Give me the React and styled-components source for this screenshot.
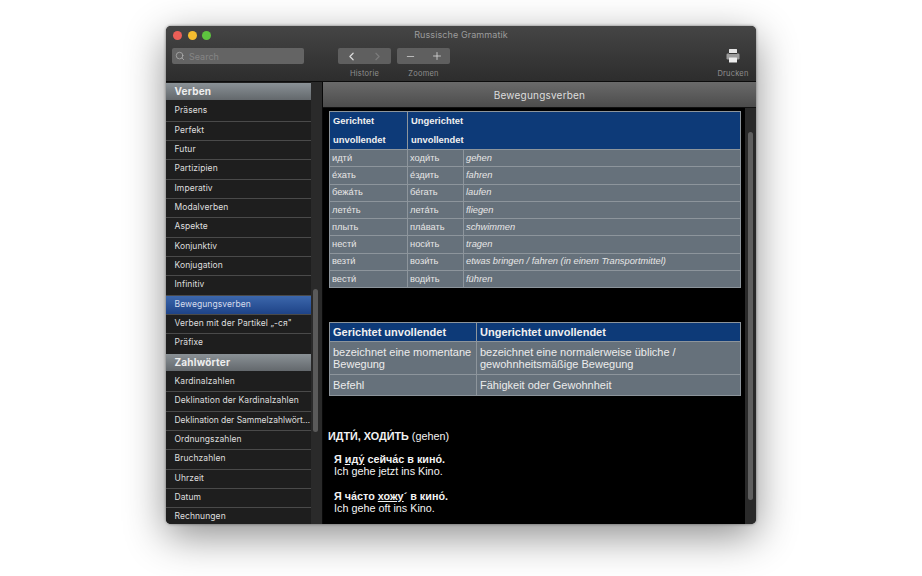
import React from 'react';
import styled, { createGlobalStyle } from 'styled-components';
import { ChevronLeft, ChevronRight, Minus, Plus, Search } from 'lucide-react';

const Global = createGlobalStyle`
  html, body { margin: 0; background: #fff; height: 100%; overflow: hidden; }
`;

const Window = styled.div`
  width: 590px;
  height: 498px;
  margin: 26px 0 0 166px;
  border-radius: 5px;
  overflow: hidden;
  display: flex;
  flex-direction: column;
  font-family: Inter, "Noto Sans", sans-serif;
  box-shadow: 0 12px 40px rgba(0, 0, 0, 0.45), 0 0 3px rgba(0, 0, 0, 0.5);
  background: #1e1e1e;
`;

const Header = styled.header`
  height: 55px;
  flex: none;
  background: linear-gradient(#454545, #2d2d2d);
  border-bottom: 1px solid #0c0c0c;
  display: flex;
  flex-direction: column;
`;

const TitleBar = styled.div`
  height: 17px;
  flex: none;
  display: grid;
  grid-template-columns: 1fr auto 1fr;
  align-items: center;
  padding: 0 7px 0 7px;
`;

const Lights = styled.div`
  display: flex;
  gap: 5.5px;
  margin-top: 1px;
`;

const Light = styled.span`
  width: 9px;
  height: 9px;
  border-radius: 50%;
  background: ${p => p.$color};
`;

const Title = styled.div`
  font-size: 9px;
  letter-spacing: 0.1px;
  color: #9c9c9c;
`;

const Toolbar = styled.div`
  flex: 1;
  display: flex;
  padding: 5px 6px 0;
  align-items: flex-start;
`;

const SearchBox = styled.div`
  width: 132px;
  height: 16px;
  border-radius: 2px;
  background: #646464;
  display: flex;
  align-items: center;
  gap: 4px;
  padding-left: 3px;
  box-sizing: border-box;
  font-size: 9px;
  color: #858585;
  margin-right: 34px;
  svg { color: #bdbdbd; }
`;

const ToolGroup = styled.div`
  width: 53px;
  margin-right: 6px;
  display: flex;
  flex-direction: column;
  align-items: center;
`;

const Segmented = styled.div`
  width: 53px;
  height: 16px;
  border-radius: 2px;
  background: #5f5f5f;
  display: flex;
`;

const Segment = styled.span`
  flex: 1;
  display: flex;
  align-items: center;
  justify-content: center;
  color: ${p => p.$off ? '#7c7c7c' : '#dcdcdc'};
`;

const ToolLabel = styled.div`
  font-size: 7.5px;
  letter-spacing: 0.2px;
  color: #8f8f8f;
  margin-top: 5px;
  line-height: 10px;
  white-space: nowrap;
`;

const PrintGroup = styled.div`
  margin-left: auto;
  width: 34px;
  display: flex;
  flex-direction: column;
  align-items: center;
`;

const PrintIcon = styled.svg`
  width: 16px;
  height: 16px;
  display: block;
`;

const Body = styled.div`
  flex: 1;
  min-height: 0;
  display: flex;
`;

const Side = styled.aside`
  width: 156px;
  flex: none;
  display: flex;
  border-right: 1px solid #080808;
  background: #2a2a2a;
`;

const List = styled.div`
  width: 145px;
  flex: none;
  overflow: hidden;
  padding-top: 1px;
  background: #1e1e1e;
`;

const Section = styled.div`
  height: 17.33px;
  margin-bottom: 2px;
  padding-left: 8.5px;
  background: linear-gradient(#8a9196, #63686c);
  font-weight: 700;
  font-size: 10px;
  line-height: 17.33px;
  letter-spacing: 0.2px;
  color: #eeeeee;
`;

const Item = styled.div`
  height: 18.33px;
  line-height: 17px;
  border-bottom: 1px solid #4a4a4a;
  padding-left: 8.5px;
  font-size: 8.5px;
  letter-spacing: ${p => p.$tight ? '-0.04px' : '0.08px'};
  color: ${p => p.$active ? '#d5dcec' : '#dedede'};
  white-space: nowrap;
  background: ${p => p.$active ? 'linear-gradient(#3c67ac, #1e4387)' : 'transparent'};
  ${p => p.$noRule && 'border-bottom-color: transparent;'}
`;

const SideTrack = styled.div`
  flex: 1;
  position: relative;
`;

const SideThumb = styled.div`
  position: absolute;
  left: 2px;
  top: 207px;
  width: 5px;
  height: 143px;
  border-radius: 3px;
  background: #5a5a5a;
`;

const Main = styled.main`
  flex: 1;
  min-width: 0;
  display: flex;
  flex-direction: column;
`;

const MainTitle = styled.div`
  height: 26px;
  flex: none;
  background: linear-gradient(#6a6a6a, #4c4c4c);
  border-bottom: 1px solid #111;
  box-sizing: border-box;
  text-align: center;
  line-height: 26px;
  font-size: 10px;
  letter-spacing: 0.2px;
  color: #dddddd;
`;

const MainBody = styled.div`
  flex: 1;
  min-height: 0;
  display: flex;
`;

const Content = styled.div`
  flex: 1;
  min-width: 0;
  overflow: hidden;
  background: #000;
  padding: 3px 4px 0 5px;
  font-family: "Liberation Sans", Arial, sans-serif;
`;

const MainTrack = styled.div`
  width: 11px;
  flex: none;
  background: #2a2a2a;
  position: relative;
`;

const MainThumb = styled.div`
  position: absolute;
  left: 3px;
  top: 24px;
  width: 5px;
  height: 368px;
  border-radius: 3px;
  background: #5f5f5f;
`;

const Table = styled.table`
  width: 412px;
  margin: 0 0 ${p => p.$after}px 1px;
  border-collapse: collapse;
  table-layout: fixed;
  border: 1px solid #8d959c;
  color: #e6e6e6;
`;

const Head = styled.th`
  background: #0d3a78;
  border: 1px solid #8d959c;
  color: #f0f0f0;
  font-weight: 700;
  text-align: left;
  vertical-align: top;
  font-size: ${p => p.$large ? '11px' : '9.4px'};
  line-height: ${p => p.$large ? '18px' : '18.5px'};
  padding: 0 3px;
`;

const Cell = styled.td`
  background: #66717b;
  border: 1px solid #8d959c;
  font-size: 9.3px;
  height: 16.3px;
  line-height: 11px;
  padding: 0 2px;
  font-style: ${p => p.$it ? 'italic' : 'normal'};
  white-space: nowrap;
`;

const TextCell = styled.td`
  background: #66717b;
  border: 1px solid #8d959c;
  font-size: 11px;
  line-height: 12.5px;
  padding: 3.5px 3px;
  color: #ececec;
`;

const Article = styled.div`
  color: #f2f2f2;
  font-size: 10.8px;
  line-height: 12px;
`;

const Lead = styled.p`
  margin: 0 0 11px;
`;

const Example = styled.p`
  margin: 0 0 13px 6px;
`;

const U = styled.u`
  text-underline-offset: 1px;
`;

const verbs = [
  ['идти́', 'ходи́ть', 'gehen'],
  ['е́хать', 'е́здить', 'fahren'],
  ['бежа́ть', 'бе́гать', 'laufen'],
  ['лете́ть', 'лета́ть', 'fliegen'],
  ['плыть', 'пла́вать', 'schwimmen'],
  ['нести́', 'носи́ть', 'tragen'],
  ['везти́', 'вози́ть', 'etwas bringen / fahren (in einem Transportmittel)'],
  ['вести́', 'води́ть', 'führen'],
];

const longEntry = 'Deklination der Sammelzahlwört…';

const menu = [
  { head: 'Verben' },
  'Präsens', 'Perfekt', 'Futur', 'Partizipien', 'Imperativ', 'Modalverben', 'Aspekte',
  'Konjunktiv', 'Konjugation', 'Infinitiv', 'Bewegungsverben',
  'Verben mit der Partikel „-ся"', 'Präfixe',
  { head: 'Zahlwörter' },
  'Kardinalzahlen', 'Deklination der Kardinalzahlen', longEntry,
  'Ordnungszahlen', 'Bruchzahlen', 'Uhrzeit', 'Datum', 'Rechnungen',
];

export default function App() {
  return (
    <>
      <Global />
      <Window>
        <Header>
          <TitleBar>
            <Lights>
              <Light $color="#ec5f57" />
              <Light $color="#f5bd2f" />
              <Light $color="#5ec43f" />
            </Lights>
            <Title>Russische Grammatik</Title>
          </TitleBar>
          <Toolbar>
            <SearchBox>
              <Search size={10} strokeWidth={1.6} />
              Search
            </SearchBox>
            <ToolGroup>
              <Segmented>
                <Segment><ChevronLeft size={13} strokeWidth={2.2} /></Segment>
                <Segment $off><ChevronRight size={13} strokeWidth={2} /></Segment>
              </Segmented>
              <ToolLabel>Historie</ToolLabel>
            </ToolGroup>
            <ToolGroup>
              <Segmented>
                <Segment><Minus size={11} strokeWidth={1.6} /></Segment>
                <Segment><Plus size={12} strokeWidth={1.6} /></Segment>
              </Segmented>
              <ToolLabel>Zoomen</ToolLabel>
            </ToolGroup>
            <PrintGroup>
              <PrintIcon viewBox="0 0 16 16">
                <rect x="4" y="1" width="8" height="4" rx="0.5" fill="#e4e4e4" />
                <rect x="1.5" y="5.5" width="13" height="6" rx="1.2" fill="#9a9a9a" />
                <rect x="4" y="9.5" width="8" height="5" rx="0.5" fill="#ececec" />
                <rect x="4" y="5" width="8" height="1" fill="#333" />
              </PrintIcon>
              <ToolLabel>Drucken</ToolLabel>
            </PrintGroup>
          </Toolbar>
        </Header>
        <Body>
          <Side>
            <List>
              {menu.map((entry, i) =>
                entry.head
                  ? <Section key={i}>{entry.head}</Section>
                  : <Item key={i} $active={entry === 'Bewegungsverben'} $noRule={entry === 'Präfixe'} $tight={entry === longEntry}>{entry}</Item>
              )}
            </List>
            <SideTrack><SideThumb /></SideTrack>
          </Side>
          <Main>
            <MainTitle>Bewegungsverben</MainTitle>
            <MainBody>
              <Content>
                <Table $after={34}>
                  <colgroup>
                    <col style={{ width: 78 }} />
                    <col style={{ width: 56 }} />
                    <col />
                  </colgroup>
                  <thead>
                    <tr>
                      <Head>Gerichtet<br />unvollendet</Head>
                      <Head colSpan={2}>Ungerichtet<br />unvollendet</Head>
                    </tr>
                  </thead>
                  <tbody>
                    {verbs.map(v => (
                      <tr key={v[0]}>
                        <Cell>{v[0]}</Cell>
                        <Cell>{v[1]}</Cell>
                        <Cell $it>{v[2]}</Cell>
                      </tr>
                    ))}
                  </tbody>
                </Table>
                <Table $after={34}>
                  <colgroup>
                    <col style={{ width: 147 }} />
                    <col />
                  </colgroup>
                  <thead>
                    <tr>
                      <Head $large>Gerichtet unvollendet</Head>
                      <Head $large>Ungerichtet unvollendet</Head>
                    </tr>
                  </thead>
                  <tbody>
                    <tr>
                      <TextCell>bezeichnet eine momentane Bewegung</TextCell>
                      <TextCell>bezeichnet eine normalerweise übliche / gewohnheitsmäßige Bewegung</TextCell>
                    </tr>
                    <tr>
                      <TextCell>Befehl</TextCell>
                      <TextCell>Fähigkeit oder Gewohnheit</TextCell>
                    </tr>
                  </tbody>
                </Table>
                <Article>
                  <Lead><b>ИДТИ́, ХОДИ́ТЬ</b> (gehen)</Lead>
                  <Example><b>Я <U>иду́</U> сейча́с в кино́.</b><br />Ich gehe jetzt ins Kino.</Example>
                  <Example><b>Я ча́сто <U>хожу</U>´ в кино́.</b><br />Ich gehe oft ins Kino.</Example>
                </Article>
              </Content>
              <MainTrack><MainThumb /></MainTrack>
            </MainBody>
          </Main>
        </Body>
      </Window>
    </>
  );
}
